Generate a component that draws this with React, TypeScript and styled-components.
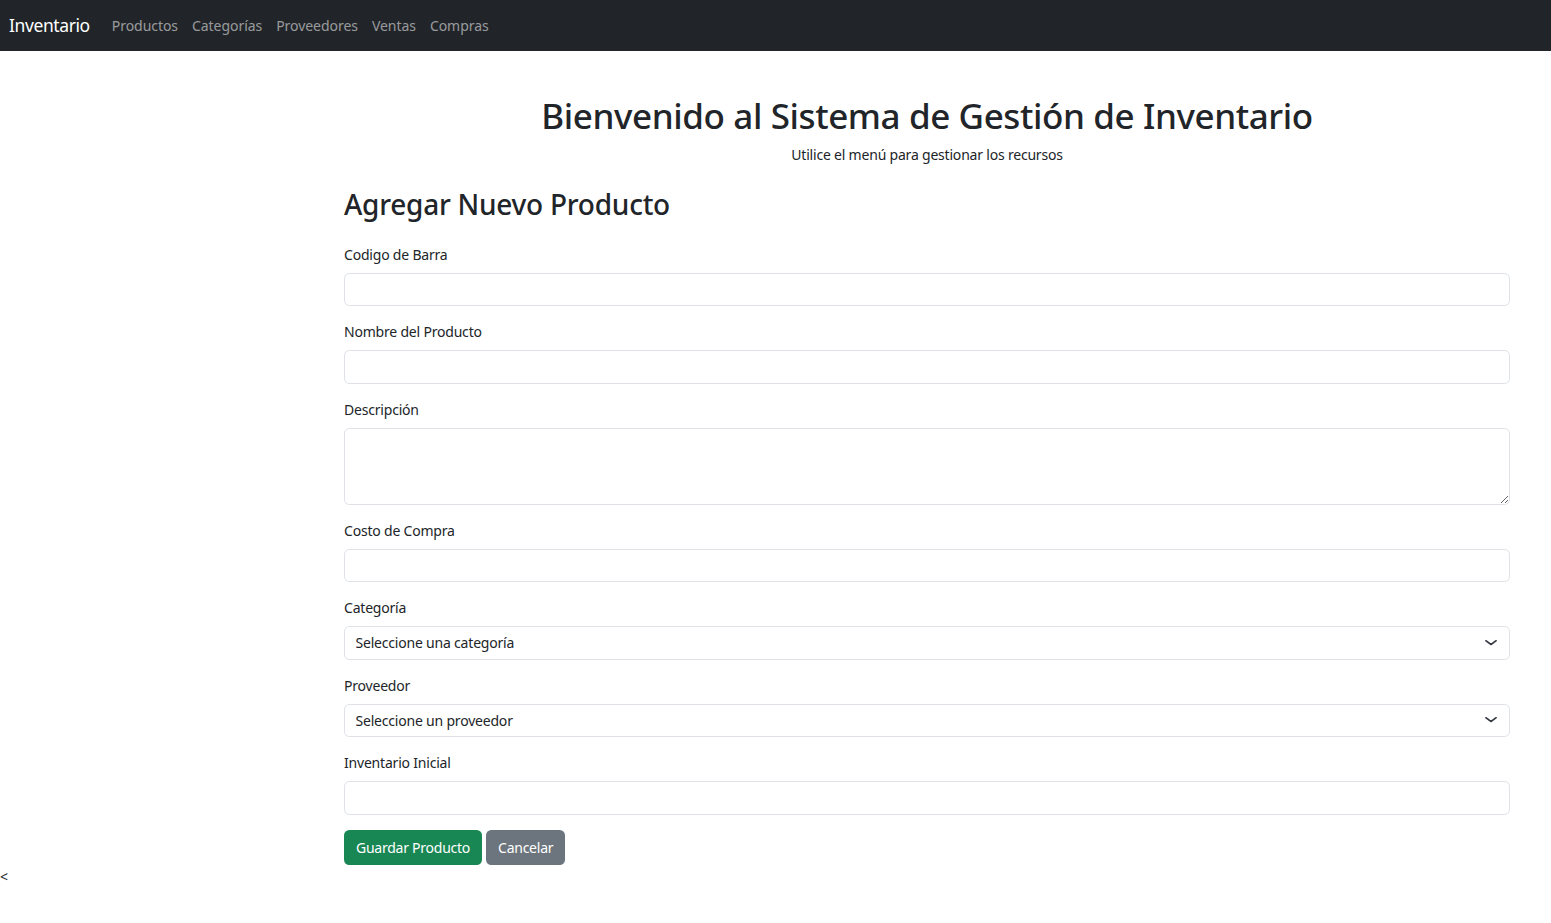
import React from "react";
import styled, { createGlobalStyle } from "styled-components";

const GlobalStyle = createGlobalStyle`
  html, body {
    margin: 0;
    padding: 0;
    background: #fff;
  }
  body {
    font-family: "Noto Sans", "Liberation Sans", sans-serif;
    font-size: 14px;
    line-height: 1.5;
    letter-spacing: -0.2px;
    color: #212529;
  }
  * {
    box-sizing: border-box;
  }
`;

const Navbar = styled.nav`
  display: flex;
  align-items: center;
  height: 51px;
  padding: 0 9px;
  background: #212529;
`;

const Brand = styled.a`
  font-size: 17.5px;
  letter-spacing: -0.4px;
  color: #fff;
  text-decoration: none;
  margin-right: 15px;
`;

const NavList = styled.div`
  display: flex;
  align-items: center;
`;

const NavLink = styled.a`
  padding: 0 7px;
  font-size: 14px;
  letter-spacing: -0.05px;
  color: rgba(255, 255, 255, 0.55);
  text-decoration: none;
`;

const Layout = styled.div`
  display: flex;
  padding-top: 44px;
`;

const Sidebar = styled.aside`
  flex: 0 0 344px;
`;

const Main = styled.main`
  flex: 1;
  padding-right: 41px;
`;

const Title = styled.h1`
  margin: 0 0 7px;
  font-size: 35px;
  font-weight: 500;
  line-height: 1.2;
  letter-spacing: -0.4px;
  text-align: center;
`;

const Lead = styled.p`
  margin: 0 0 23px;
  text-align: center;
`;

const FormTitle = styled.h2`
  margin: 0 0 22px;
  font-size: 28px;
  font-weight: 500;
  line-height: 1.2;
  letter-spacing: -0.25px;
`;

const Field = styled.div`
  margin-bottom: 15px;
`;

const Label = styled.label`
  display: block;
  margin-bottom: 8px;
`;

const controlBase = `
  display: block;
  width: 100%;
  padding: 5.25px 10.5px;
  font-family: inherit;
  font-size: 14px;
  line-height: 1.5;
  letter-spacing: -0.2px;
  color: #212529;
  background: #fff;
  border: 1px solid #dee2e6;
  border-radius: 5.25px;
  outline: none;
`;

const Input = styled.input`
  ${controlBase}
  height: 33.5px;
`;

const TextArea = styled.textarea`
  ${controlBase}
  height: 77px;
  resize: vertical;
`;

const SelectWrap = styled.div`
  position: relative;
`;

const Select = styled.select`
  ${controlBase}
  height: 33.5px;
  padding-right: 36px;
  appearance: none;
  -webkit-appearance: none;
`;

const Chevron = styled.svg`
  position: absolute;
  right: 11px;
  top: 50%;
  width: 16px;
  height: 12px;
  margin-top: -6px;
  pointer-events: none;
`;

const Actions = styled.div`
  display: flex;
  gap: 4px;
`;

const Button = styled.button<{ $variant: "success" | "secondary" }>`
  height: 35px;
  padding: 0 11px;
  font-family: inherit;
  font-size: 14px;
  line-height: 1.5;
  letter-spacing: -0.25px;
  color: #fff;
  border: 1px solid transparent;
  border-radius: 5.25px;
  background: ${(p) => (p.$variant === "success" ? "#198754" : "#6c757d")};
  cursor: pointer;
`;

const Stray = styled.div`
  padding-top: 1px;
  line-height: 21px;
`;

const links = ["Productos", "Categorías", "Proveedores", "Ventas", "Compras"];

const ChevronIcon = () => (
  <Chevron viewBox="0 0 16 16" preserveAspectRatio="none">
    <path
      d="m3 5 5 5 5-5"
      fill="none"
      stroke="#343a40"
      strokeWidth="2"
      strokeLinecap="round"
      strokeLinejoin="round"
    />
  </Chevron>
);

export default function App() {
  return (
    <>
      <GlobalStyle />
      <Navbar>
        <Brand href="#">Inventario</Brand>
        <NavList>
          {links.map((l) => (
            <NavLink key={l} href="#">
              {l}
            </NavLink>
          ))}
        </NavList>
      </Navbar>
      <Layout>
        <Sidebar />
        <Main>
          <Title>Bienvenido al Sistema de Gestión de Inventario</Title>
          <Lead>Utilice el menú para gestionar los recursos</Lead>
          <FormTitle>Agregar Nuevo Producto</FormTitle>
          <form onSubmit={(e) => e.preventDefault()}>
            <Field>
              <Label>Codigo de Barra</Label>
              <Input type="text" />
            </Field>
            <Field>
              <Label>Nombre del Producto</Label>
              <Input type="text" />
            </Field>
            <Field>
              <Label>Descripción</Label>
              <TextArea rows={3} />
            </Field>
            <Field>
              <Label>Costo de Compra</Label>
              <Input type="text" />
            </Field>
            <Field>
              <Label>Categoría</Label>
              <SelectWrap>
                <Select defaultValue="">
                  <option value="">Seleccione una categoría</option>
                </Select>
                <ChevronIcon />
              </SelectWrap>
            </Field>
            <Field>
              <Label>Proveedor</Label>
              <SelectWrap>
                <Select defaultValue="">
                  <option value="">Seleccione un proveedor</option>
                </Select>
                <ChevronIcon />
              </SelectWrap>
            </Field>
            <Field>
              <Label>Inventario Inicial</Label>
              <Input type="text" />
            </Field>
            <Actions>
              <Button $variant="success" type="submit">
                Guardar Producto
              </Button>
              <Button $variant="secondary" type="button">
                Cancelar
              </Button>
            </Actions>
          </form>
        </Main>
      </Layout>
      <Stray>&lt;</Stray>
    </>
  );
}
